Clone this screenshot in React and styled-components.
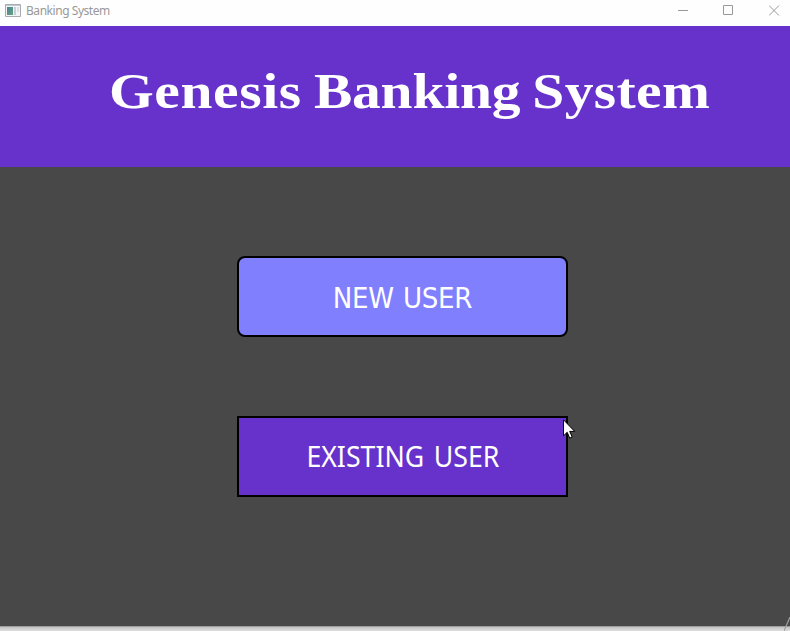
import React from "react";
import styled, { createGlobalStyle } from "styled-components";

const GlobalStyle = createGlobalStyle`
  * { box-sizing: border-box; }
  body { margin: 0; overflow: hidden; background: #484848; }
`;

const Window = styled.div`
  position: relative;
  display: flex;
  flex-direction: column;
  width: 790px;
  height: 631px;
  background: #484848;
`;

const TitleBar = styled.div`
  display: flex;
  align-items: center;
  flex: none;
  height: 26px;
  padding: 0 10px 5px 5px;
  background: #fefefe;
`;

const AppIcon = styled.svg`
  display: block;
  width: 16px;
  height: 13px;
  flex: none;
`;

const WindowTitle = styled.span`
  flex: 1;
  margin-left: 5px;
  color: #999;
  font: 12px/17px "Noto Sans", sans-serif;
  letter-spacing: -0.45px;
  white-space: nowrap;
`;

const Controls = styled.div`
  display: flex;
  gap: 34px;
`;

const ControlIcon = styled.svg`
  display: block;
  width: 11px;
  height: 11px;
  fill: none;
  stroke: #999;
`;

const CloseIcon = styled(ControlIcon)`
  margin-left: 1px;
`;

const Banner = styled.header`
  display: flex;
  justify-content: center;
  flex: none;
  height: 141px;
  padding: 35px 0 0 29px;
  background: #6732cb;
`;

const Heading = styled.h1`
  margin: 0;
  color: #fff;
  font: bold 51px/60px "Liberation Serif", serif;
  word-spacing: -2px;
  white-space: nowrap;
  transform: scaleX(1.128);
`;

const HeadingWord = styled.span`
  letter-spacing: ${(p) => p.$spacing};
`;

const Actions = styled.main`
  display: flex;
  flex: 1;
  flex-direction: column;
  align-items: center;
  gap: 79px;
  padding: 89px 0 0 15px;
`;

const ActionButton = styled.button`
  display: flex;
  align-items: center;
  justify-content: center;
  width: 331px;
  height: 81px;
  padding: 0;
  border: 2px solid #000;
  border-radius: ${(p) => (p.$highlighted ? "8px" : "0")};
  background: ${(p) => (p.$highlighted ? "#8080ff" : "#6732cb")};
  color: #fff;
`;

const ButtonLabel = styled.span`
  font: 29px/36px "Noto Sans", sans-serif;
  word-spacing: 3px;
  white-space: nowrap;
  padding-bottom: 2px;
  transform: scaleX(0.92);
`;

const HighlightedLabel = styled(ButtonLabel)`
  padding: 2px 0 0;
  font-family: "DejaVu Sans Condensed", sans-serif;
  letter-spacing: -0.25px;
  word-spacing: 1px;
  transform: none;
`;

const BottomEdge = styled.footer`
  flex: none;
  height: 5px;
  border-top: 1px solid #9d9d9d;
  background: linear-gradient(#c2c2c2, #dedede);
`;

const Pointer = styled.svg`
  position: absolute;
  left: 563px;
  top: 419px;
  width: 13px;
  height: 21px;
`;

const ResizeGrip = styled.svg`
  position: absolute;
  right: 0;
  bottom: 0;
  width: 6px;
  height: 14px;
`;

export default function App() {
  return (
    <>
      <GlobalStyle />
      <Window>
        <TitleBar>
          <AppIcon viewBox="0 0 16 13">
            <defs>
              <linearGradient id="pane" x2="1" y2="1">
                <stop stopColor="#4d809c" />
                <stop offset="1" stopColor="#65a476" />
              </linearGradient>
            </defs>
            <path d="M.5.5h15v12H.5z" fill="#f3f4f6" stroke="#a7abb2" />
            <path d="M1 1h14v1H1z" fill="#c5c9cf" />
            <path d="M2 3h6v8H2z" fill="url(#pane)" />
            <path d="M9 3h2v8H9z" fill="#c7d0da" />
            <path d="M12 3h2v5h-2z" fill="#dce1e5" />
          </AppIcon>
          <WindowTitle>Banking System</WindowTitle>
          <Controls>
            <ControlIcon viewBox="0 0 11 11"><path d="M0 5.5h10" /></ControlIcon>
            <ControlIcon viewBox="0 0 11 11"><path d="M.5 .5h9v9h-9z" /></ControlIcon>
            <CloseIcon viewBox="0 0 11 11"><path d="M0 .5l10 10M10 .5l-10 10" /></CloseIcon>
          </Controls>
        </TitleBar>
        <Banner>
          <Heading>
            <HeadingWord $spacing="0.55px">Genesis</HeadingWord>{" "}
            <HeadingWord $spacing="-0.2px">Banking</HeadingWord>{" "}
            <HeadingWord $spacing="0.3px">System</HeadingWord>
          </Heading>
        </Banner>
        <Actions>
          <ActionButton $highlighted>
            <HighlightedLabel>NEW USER</HighlightedLabel>
          </ActionButton>
          <ActionButton>
            <ButtonLabel>EXISTING USER</ButtonLabel>
          </ActionButton>
        </Actions>
        <BottomEdge />
        <ResizeGrip viewBox="0 0 6 14">
          <path d="M0 14L6 0" fill="none" stroke="#a0a0a0" strokeWidth="1.2" />
        </ResizeGrip>
        <Pointer viewBox="0 0 13 21">
          <path d="M.5.8v16l3.7-3.5 2.5 5.8 2.5-1.1-2.5-5.6h5z" fill="#fff" stroke="#000" />
        </Pointer>
      </Window>
    </>
  );
}
